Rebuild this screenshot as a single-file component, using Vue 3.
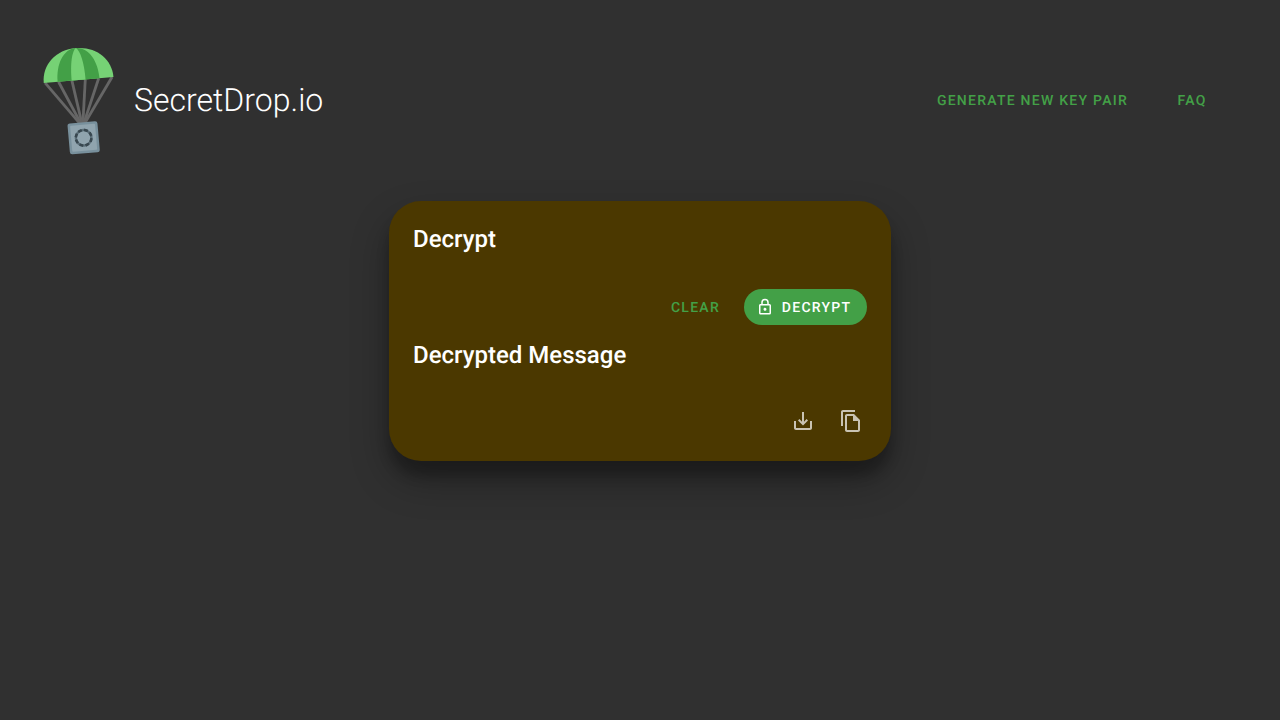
<script setup>
const stripes = [-35, -21, -7, 7, 21, 35]
const teeth = Array.from({ length: 8 }, (_, i) => i * 45)
</script>

<template>
  <div class="app">
    <header class="header">
      <div class="brand">
        <svg class="logo" width="80" height="120" viewBox="0 0 80 120">
          <g transform="translate(40.6 40) rotate(-5)">
            <g stroke="#666" stroke-width="2.8">
              <line v-for="x in stripes" :key="x" :x1="x * 0.96" y1="0" x2="0" y2="47" />
            </g>
            <path d="M-35 0C-35-18.5-20-32 0-32S35-18.5 35 0Z" fill="#76d275" />
            <path d="M-21 0C-21-17-13-32 0-32S21-17 21 0Z" fill="#43a047" />
            <path d="M-7 0C-7-18-4-29 0-32C4-29 7-18 7 0Z" fill="#76d275" />
            <rect x="-15" y="42.5" width="30" height="31" rx="2.5" fill="#78909c" />
            <rect x="-12.5" y="45" width="25" height="26" rx="1" fill="#90a4ae" />
            <circle cx="0" cy="58" r="7.8" fill="none" stroke="#5c6f79" stroke-width="2.4" />
            <rect v-for="a in teeth" :key="a" x="-2" y="-9" width="4" height="2.6" fill="#38474f" :transform="`translate(0 58) rotate(${a + 22})`" />
          </g>
        </svg>
        <h1 class="title">SecretDrop.io</h1>
      </div>
      <nav class="nav">
        <button class="btn">Generate new key pair</button>
        <button class="btn faq">FAQ</button>
      </nav>
    </header>

    <main class="card">
      <h2 class="heading">Decrypt</h2>
      <div class="actions">
        <button class="btn clear">Clear</button>
        <button class="btn primary">
          <svg width="18" height="18" viewBox="0 0 24 24" fill="currentColor"><path d="M12,17C10.89,17 10,16.1 10,15C10,13.89 10.89,13 12,13A2,2 0 0,1 14,15A2,2 0 0,1 12,17M18,20V10H6V20H18M18,8A2,2 0 0,1 20,10V20A2,2 0 0,1 18,22H6C4.89,22 4,21.1 4,20V10C4,8.89 4.89,8 6,8H7V6A5,5 0 0,1 12,1A5,5 0 0,1 17,6V8H18M12,3A3,3 0 0,0 9,6V8H15V6A3,3 0 0,0 12,3Z" /></svg>
          <span class="label">Decrypt</span>
        </button>
      </div>
      <h2 class="heading result">Decrypted Message</h2>
      <div class="tools">
        <button class="icon" aria-label="Download">
          <svg width="24" height="24" viewBox="0 0 24 24" fill="currentColor"><path d="M19 12v7H5v-7H3v7c0 1.1.9 2 2 2h14c1.1 0 2-.9 2-2v-7h-2zm-6 .67l2.59-2.58L17 11.5l-5 5-5-5 1.41-1.41L11 12.67V3h2z" /></svg>
        </button>
        <button class="icon" aria-label="Copy">
          <svg width="24" height="24" viewBox="0 0 24 24" fill="currentColor"><path d="M16 1H4c-1.1 0-2 .9-2 2v14h2V3h12V1zm-1 4H8c-1.1 0-1.99.9-1.99 2L6 21c0 1.1.89 2 1.99 2H19c1.1 0 2-.9 2-2V11l-6-6zM8 21V7h6v5h5v9H8z" /></svg>
        </button>
      </div>
    </main>
  </div>
</template>

<style>
body {
  background: #303030;
}
</style>

<style scoped>
.app {
  box-sizing: border-box;
  min-height: 720px;
  padding-top: 40px;
  background: #303030;
  color: #fff;
  font-family: Roboto, sans-serif;
  text-rendering: geometricPrecision;
}
.header {
  display: flex;
  align-items: center;
  justify-content: space-between;
  height: 120px;
  padding: 0 56px 0 38px;
}
.brand {
  display: flex;
  align-items: center;
  gap: 16px;
}
.logo {
  display: block;
}
.title {
  margin: 0;
  font-size: 32px;
  font-weight: 300;
  line-height: 40px;
}
.nav {
  display: flex;
  gap: 16px;
}
.btn {
  box-sizing: border-box;
  display: flex;
  align-items: center;
  justify-content: center;
  height: 36px;
  padding: 1px 16px 0;
  border: 0;
  border-radius: 18px;
  background: none;
  color: #43a047;
  font: 500 14px/20px Roboto, sans-serif;
  letter-spacing: 0.0892857143em;
  text-rendering: geometricPrecision;
  text-transform: uppercase;
  white-space: nowrap;
}
.faq {
  min-width: 64px;
}
.card {
  box-sizing: border-box;
  width: 502px;
  height: 260px;
  margin: 41px auto 0;
  padding: 22px 24px 0;
  border-radius: 32px;
  background: #4b3800;
  box-shadow: 0 19px 38px rgba(0, 0, 0, 0.3), 0 15px 12px rgba(0, 0, 0, 0.22);
}
.heading {
  margin: 0;
  font-size: 24px;
  font-weight: 500;
  line-height: 32px;
}
.actions {
  display: flex;
  justify-content: flex-end;
  gap: 8px;
  margin-top: 34px;
}
.clear {
  padding-right: 15.6px;
}
.primary {
  gap: 8px;
  padding: 0 16px 0 12px;
  background: #43a047;
  color: #fff;
}
.label {
  margin: 0 -0.3px 0 0.3px;
  padding-top: 1px;
}
.result {
  margin-top: 14px;
}
.tools {
  display: flex;
  justify-content: flex-end;
  gap: 12px;
  margin-top: 32px;
  margin-right: -2px;
}
.icon {
  display: flex;
  align-items: center;
  justify-content: center;
  width: 36px;
  height: 36px;
  padding: 0;
  border: 0;
  background: none;
  color: rgba(255, 255, 255, 0.7);
}
</style>
